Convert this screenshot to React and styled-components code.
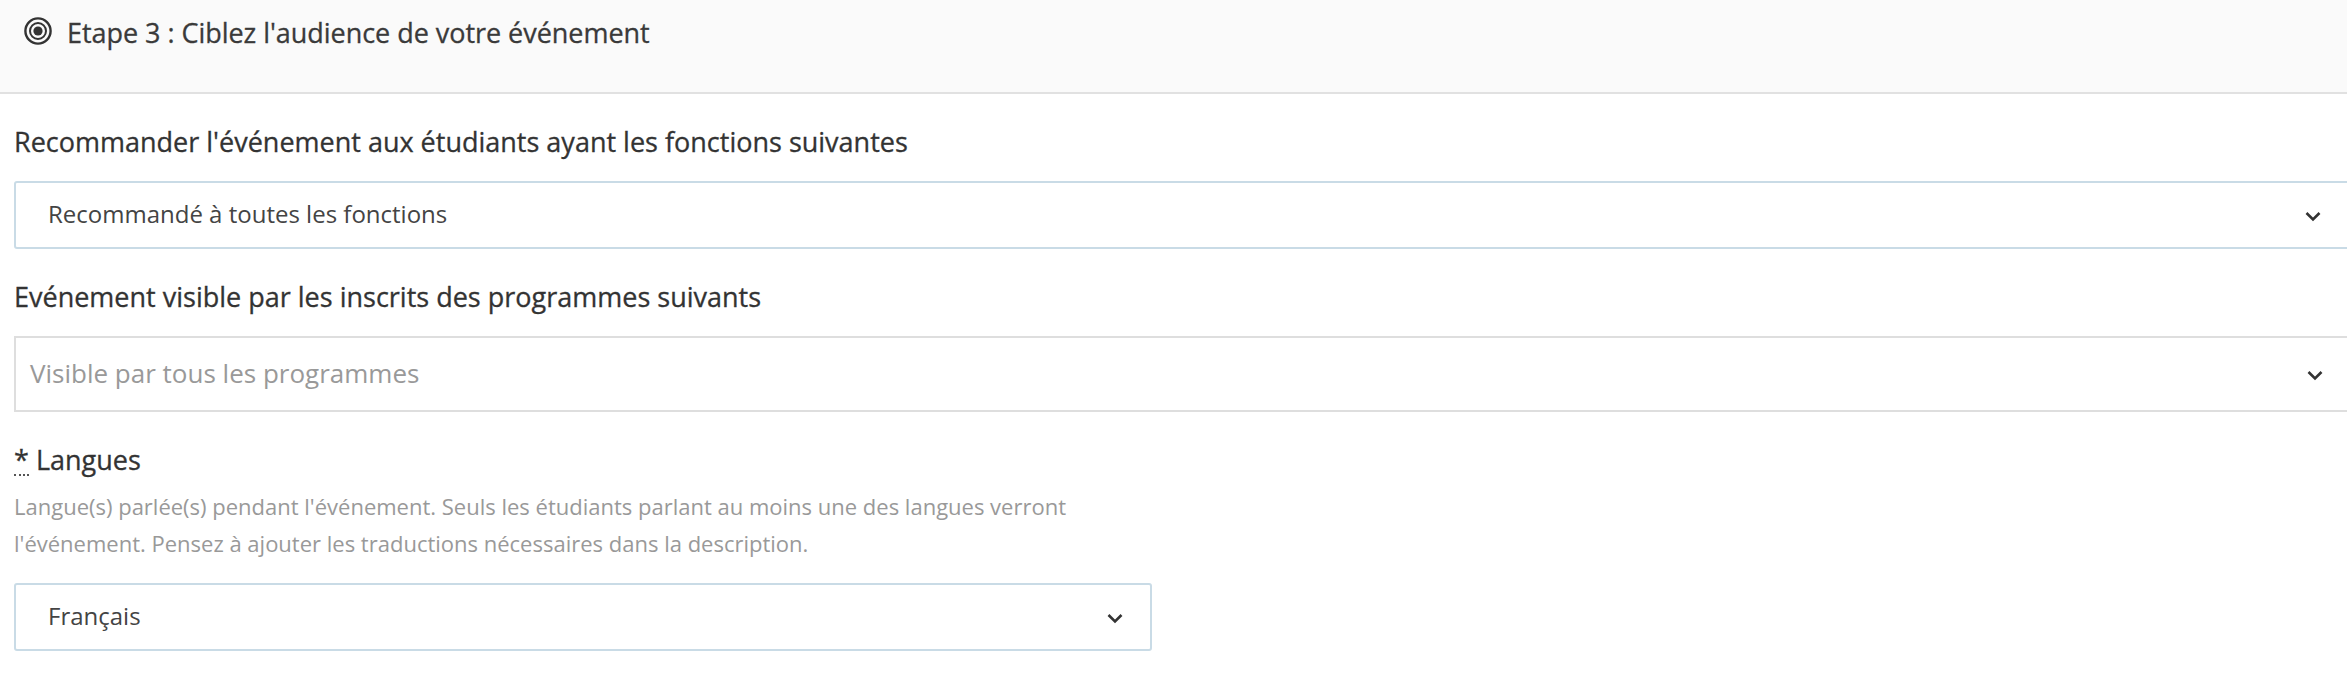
import React from "react";
import styled, { createGlobalStyle } from "styled-components";

const Global = createGlobalStyle`
  html, body { margin: 0; padding: 0; background: #fff; overflow: hidden; }
  body { font-family: "Open Sans", "Noto Sans", sans-serif; color: #333; }
`;
const Page = styled.div`width: 2347px; height: 674px; overflow: hidden;`;
const Header = styled.header`
  height: 94px; box-sizing: border-box; background: #fafafa; border-bottom: 2px solid #e1e1e1;
  display: flex; align-items: flex-start; gap: 15px; padding: 15px 0 0 24px;
`;
const Title = styled.h2`margin: 0; font-size: 27px; line-height: 36px; font-weight: 500; letter-spacing: -0.04px; -webkit-text-stroke: 0.3px #3a3a3a; color: #3a3a3a;`;
const Target = styled.svg`width: 28px; height: 28px; margin-top: 2px; flex: none;`;
const Body = styled.main`padding: 0 0 0 14px; display: flex; flex-direction: column;`;
const Label = styled.label`display: block; font-size: 27px; line-height: 36px; font-weight: 500; -webkit-text-stroke: 0.3px #333; color: #333;`;
const Field = styled.section`padding-top: ${p => p.$top}px;`;
const SelectBox = styled.div`
  box-sizing: border-box;
  width: ${p => p.$width}px; height: ${p => p.$height}px;
  margin-top: ${p => p.$mt}px;
  border: 2px solid ${p => (p.$plain ? "#dedede" : "#c9dbe6")};
  border-radius: ${p => (p.$plain ? 0 : 3)}px;
  background: #fff; display: flex; align-items: center; justify-content: space-between;
  padding: 0 ${p => p.$pr}px 0 ${p => p.$pl}px;
`;
const Value = styled.span`font-size: 24px; line-height: 32px; margin-bottom: 3px; color: #444;`;
const Placeholder = styled.span`font-size: 26px; line-height: 36px; margin-bottom: 2px; color: #999;`;
const Chevron = styled.svg`width: 16px; height: 11px; flex: none; margin-top: 2px;`;
const Star = styled.abbr`border-bottom: 2px dotted #555; display: inline-block; line-height: 29px;`;
const Help = styled.p`margin: 10px 0 0; width: 1100px; font-size: 22px; line-height: 37px; color: #999;`;

const Arrow = () => (
  <Chevron viewBox="0 0 16 11">
    <path d="M1.5 2 L8 8.5 L14.5 2" fill="none" stroke="#333" strokeWidth="2.6" />
  </Chevron>
);

export default function App() {
  return (
    <Page>
      <Global />
      <Header>
        <Target viewBox="0 0 28 28">
          <circle cx="14" cy="14" r="12.6" fill="none" stroke="#333" strokeWidth="2.4" />
          <circle cx="14" cy="14" r="8" fill="none" stroke="#333" strokeWidth="2" />
          <circle cx="14" cy="14" r="4.6" fill="#333" />
        </Target>
        <Title>Etape 3 : Ciblez l'audience de votre événement</Title>
      </Header>
      <Body>
        <Field $top={30}>
          <Label>Recommander l'événement aux étudiants ayant les fonctions suivantes</Label>
          <SelectBox $width={2360} $height={68} $mt={21} $pl={32} $pr={51}>
            <Value>Recommandé à toutes les fonctions</Value>
            <Arrow />
          </SelectBox>
        </Field>
        <Field $top={30}>
          <Label>Evénement visible par les inscrits des programmes suivants</Label>
          <SelectBox $plain $width={2360} $height={76} $mt={21} $pl={14} $pr={49}>
            <Placeholder>Visible par tous les programmes</Placeholder>
            <Arrow />
          </SelectBox>
        </Field>
        <Field $top={30}>
          <Label><Star>*</Star> Langues</Label>
          <Help>Langue(s) parlée(s) pendant l'événement. Seuls les étudiants parlant au moins une des langues verront l'événement. Pensez à ajouter les traductions nécessaires dans la description.</Help>
          <SelectBox $width={1138} $height={68} $mt={21} $pl={32} $pr={27}>
            <Value>Français</Value>
            <Arrow />
          </SelectBox>
        </Field>
      </Body>
    </Page>
  );
}
